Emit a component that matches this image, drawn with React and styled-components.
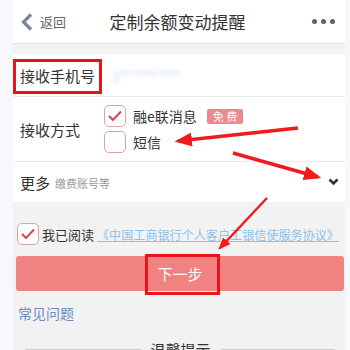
import styled, { createGlobalStyle } from "styled-components";

const Global = createGlobalStyle`
  body {
    margin: 0;
    background: #f6f8fb;
    font-family: "Noto Sans CJK SC", "Noto Sans", sans-serif;
  }
`;

const App = () => {
  return (
    <>
      <Global />
      <Page>
        <Header>
          <Back>
            <svg width="14" height="18" viewBox="0 0 14 18">
              <path d="M11 1.5 L3.5 9 L11 16.5" fill="none" stroke="#7b8593" strokeWidth="3.2" strokeLinejoin="miter" />
            </svg>
            <span>返回</span>
          </Back>
          <Title>定制余额变动提醒</Title>
          <Dots>
            <i />
            <i />
            <i />
          </Dots>
        </Header>
        <Gap />
        <Card>
          <Row height={42}>
            <Label>接收手机号</Label>
            <Phone>1** **** ****</Phone>
            <Mark style={{ left: 0, top: 5, width: 89, height: 35 }} />
          </Row>
          <Row height={64} divider>
            <Label>接收方式</Label>
            <Options>
              <Option>
                <Box checked>
                  <Tick />
                </Box>
                <span>融e联消息</span>
                <Badge>免 费</Badge>
              </Option>
              <Option>
                <Box />
                <span>短信</span>
              </Option>
            </Options>
          </Row>
          <Row height={40} divider>
            <Label>更多</Label>
            <Hint>缴费账号等</Hint>
            <Chevron>
              <svg width="11" height="8" viewBox="0 0 11 8">
                <path d="M1.5 1.5 L5.5 5.5 L9.5 1.5" fill="none" stroke="#333" strokeWidth="2.6" />
              </svg>
            </Chevron>
          </Row>
        </Card>
        <Lower>
          <Agree>
            <Box checked>
              <Tick />
            </Box>
            <span>我已阅读</span>
            <Link>《中国工商银行个人客户工银信使服务协议》</Link>
          </Agree>
          <ButtonWrap>
            <Next>下一步</Next>
            <Mark style={{ left: 129, top: -2, width: 75, height: 41 }} />
          </ButtonWrap>
          <Faq>常见问题</Faq>
          <Tips>
            <Line />
            <span>温馨提示</span>
            <Line />
          </Tips>
        </Lower>
        <Arrows width="350" height="350" viewBox="0 0 350 350">
          <defs>
            <marker id="head" markerWidth="5" markerHeight="4" refX="4" refY="2" orient="auto" markerUnits="strokeWidth">
              <path d="M0 0 L5 2 L0 4 Z" fill="#ee1c1c" />
            </marker>
          </defs>
          <line x1="298" y1="128" x2="178" y2="141" stroke="#ee1c1c" strokeWidth="3.5" markerEnd="url(#head)" />
          <line x1="233" y1="153" x2="318" y2="177" stroke="#ee1c1c" strokeWidth="3.5" markerEnd="url(#head)" />
          <line x1="267" y1="198" x2="220" y2="248" stroke="#ee1c1c" strokeWidth="2.5" markerEnd="url(#head)" />
        </Arrows>
      </Page>
    </>
  );
};

const Page = styled.div`
  position: relative;
  margin-left: 13px;
  width: 332px;
  height: 350px;
  background: #f2f2f2;
  overflow: hidden;
`;

const Header = styled.div`
  height: 43px;
  display: flex;
  align-items: center;
  justify-content: space-between;
  padding: 0 10px 0 7px;
  background: #fff;
  border-bottom: 1px solid #e2e2e2;
`;

const Back = styled.div`
  display: flex;
  align-items: center;
  gap: 6px;
  width: 80px;
  font-size: 13px;
  color: #666;
`;

const Title = styled.div`
  font-size: 17px;
  color: #333;
`;

const Dots = styled.div`
  width: 80px;
  display: flex;
  justify-content: flex-end;
  gap: 4px;
  i {
    width: 5px;
    height: 5px;
    border-radius: 50%;
    background: #5b6470;
  }
`;

const Gap = styled.div`
  height: 10px;
`;

const Card = styled.div`
  background: #fff;
`;

const Row = styled.div`
  position: relative;
  height: ${(p) => p.height}px;
  display: flex;
  align-items: center;
  padding-left: 7px;
  border-top: ${(p) => (p.divider ? "1px solid #ececec" : "none")};
`;

const Label = styled.div`
  font-size: 15px;
  color: #333;
`;

const Phone = styled.div`
  margin-left: 18px;
  font-size: 12px;
  color: #a9c4e6;
  filter: blur(2.5px);
`;

const Mark = styled.div`
  position: absolute;
  border: 3px solid #e8141c;
  box-sizing: border-box;
`;

const Options = styled.div`
  display: flex;
  flex-direction: column;
  gap: 4px;
  margin-left: 24px;
`;

const Option = styled.div`
  display: flex;
  align-items: center;
  gap: 7px;
  font-size: 14px;
  color: #333;
`;

const Box = styled.div`
  flex: none;
  width: 20px;
  height: 20px;
  border: 1px solid #d9a3ab;
  border-radius: 5px;
  display: flex;
  align-items: center;
  justify-content: center;
  background: #fff;
`;

const Tick = () => (
  <svg width="16" height="14" viewBox="0 0 16 14">
    <path d="M2 7 L6 11 L14 2.5" fill="none" stroke="#d84a55" strokeWidth="2.2" />
  </svg>
);

const Badge = styled.span`
  margin-left: 3px;
  padding: 0 6px;
  height: 15px;
  line-height: 15px;
  font-size: 11px;
  color: #fff;
  background: #e98a8f;
  border-radius: 2px;
`;

const Hint = styled.div`
  margin-left: 5px;
  font-size: 11px;
  color: #999;
  margin-top: 2px;
`;

const Chevron = styled.div`
  margin-left: auto;
  margin-right: 6px;
  display: flex;
`;

const Lower = styled.div`
  padding: 21px 0 0 3px;
`;

const Agree = styled.div`
  display: flex;
  align-items: center;
  gap: 3px;
  padding-left: 1px;
  font-size: 13px;
  color: #333;
  white-space: nowrap;
`;

const Link = styled.span`
  flex: none;
  font-size: 12.1px;
  color: #8cc2ea;
  text-decoration: underline;
`;

const ButtonWrap = styled.div`
  position: relative;
  margin-top: 11px;
`;

const Next = styled.div`
  width: 328px;
  height: 35px;
  display: flex;
  align-items: center;
  justify-content: center;
  background: #f08281;
  border-radius: 3px;
  color: #fff;
  font-size: 15px;
`;

const Faq = styled.div`
  margin-top: 12px;
  padding-left: 2px;
  font-size: 14px;
  color: #6b8dbf;
`;

const Tips = styled.div`
  margin-top: 16px;
  display: flex;
  align-items: center;
  gap: 10px;
  padding: 0 10px;
  font-size: 15px;
  color: #333;
`;

const Line = styled.div`
  flex: 1;
  height: 1px;
  background: #ccc;
`;

const Arrows = styled.svg`
  position: absolute;
  left: -13px;
  top: 0;
  pointer-events: none;
`;

export default App;
